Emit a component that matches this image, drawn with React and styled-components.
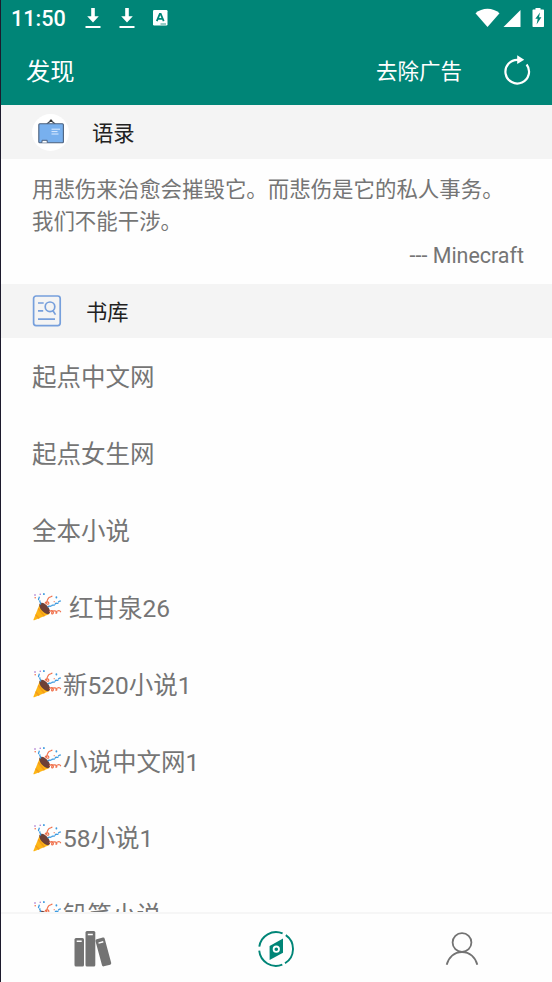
import React from "react";
import styled, { createGlobalStyle } from "styled-components";

const BOOK_SITES = [
  { name: "起点中文网" },
  { name: "起点女生网" },
  { name: "全本小说" },
  { name: "红甘泉26", party: true, spaced: true },
  { name: "新520小说1", party: true },
  { name: "小说中文网1", party: true },
  { name: "58小说1", party: true },
  { name: "铅笔小说", party: true },
];

const DownloadIcon = () => (
  <svg width="16" height="21" viewBox="0 0 16 21" fill="#fff">
    <path d="M6.2 0h3.6v8.2h4L8 14.6 2.2 8.2h4z" />
    <path d="M.5 18h15v2H.5z" />
  </svg>
);

const InputIcon = () => (
  <svg width="15" height="16" viewBox="0 0 15 16">
    <rect width="14.5" height="15.5" rx="1.2" fill="#fff" />
    <path
      d="M3.8 11.2 6.8 4h.9l3 7.2M5 8.9h4.5"
      fill="none"
      stroke="#008577"
      strokeWidth="1.8"
    />
    <path d="M7.5 14h5.5" stroke="#008577" strokeWidth=".8" />
  </svg>
);

const SignalIcons = () => (
  <svg width="70" height="20" viewBox="0 0 70 20" fill="#fff">
    <path d="M.5 5.2C7-.8 18-.8 24.5 5.2L12.5 19z" />
    <path d="M45.5 2v17h-17z" />
    <path d="M60.5 0h5v1.5h2.8q.7 0 .7.7v16.1q0 .7-.7.7H58.2q-.7 0-.7-.7V2.2q0-.7.7-.7h2.3z" />
    <path d="m65 4.5-4.7 6.2h2.4l-1.1 5.8 4.8-7.2H64z" fill="#008577" />
  </svg>
);

const RefreshIcon = () => (
  <svg width="30" height="32" viewBox="0 0 30 32" fill="none">
    <path
      d="M16 4.9A11.8 11.8 0 1 0 24.6 9.5"
      stroke="#fff"
      strokeWidth="2.2"
    />
    <path d="M15.2.2 22.2 4.8l-7 4.2z" fill="#fff" />
  </svg>
);

const BoardIcon = () => (
  <svg width="28" height="26" viewBox="0 0 28 26" fill="none">
    <path d="M9.8 5 14 1.6 18.2 5" stroke="#48505c" strokeWidth="1.3" />
    <circle cx="14" cy="1.8" r="1.3" fill="#333" />
    <rect
      x="1.8"
      y="4.8"
      width="24.6"
      height="19"
      rx="1"
      fill="#78b0ee"
      stroke="#4c617e"
      strokeWidth="1.1"
    />
    <path d="M14.5 10.2H23M14.5 12.6h6M14.5 15h7" stroke="#dcebff" />
    <path d="M5 23.6v-2.3h5.2v2.3" fill="#fff" stroke="#4c617e" />
  </svg>
);

const LibraryIcon = () => (
  <svg
    width="30"
    height="32"
    viewBox="0 0 30 32"
    fill="none"
    stroke="#769fdc"
    strokeWidth="1.7"
  >
    <rect x="1.6" y="1" width="26.6" height="29.6" rx="2.5" />
    <path d="M6 8h5.7M6 15.8h5.2M6 24.2h17" />
    <circle cx="18" cy="11.8" r="4.8" />
    <path d="m20.6 15.2 2.9 4.4" />
  </svg>
);

const PartyIcon = () => (
  <svg width="30" height="30" viewBox="0 0 30 30" fill="none">
    <path d="M8.2 11 1.5 27.4q-.4 1.2.8.9L17.5 22z" fill="#fdb515" />
    <path
      d="m6.2 16.5 6.2 7.7M3.6 22.6l3.6 3.9"
      stroke="#f39a1c"
      strokeWidth="1.4"
    />
    <ellipse
      cx="12.7"
      cy="16.4"
      rx="3.6"
      ry="7"
      transform="rotate(-42 12.7 16.4)"
      fill="#6d4037"
    />
    <g stroke="#f0714c" strokeWidth="1.2" strokeLinecap="round">
      <path d="M13.2 11.2c.2-2.4 4.7-1.2 3.4.6-1.2 1.3-3-.5-1.8-2.3 1-1.7 1-3.2 2.2-4 1-.7 2.3-.4 3-1.3" />
      <path d="M17.6 19.5c1.8-1.5 3.6-1 3.8.8.1 1.8-1.8 2.3-1.8.8 0-2.4 3.8-2.8 4.8-1.6 1 1 .2 2.2-.6 1.5M25.6 19c1.3-.6 2.5-.3 3 .8" />
    </g>
    <g stroke="#3d9be0" strokeWidth="1.3" strokeLinecap="round">
      <path d="M8.5 12c1-1.4-1.4-1.8-.6-3.2M6.6 7.6c-.5-1 .9-1.4.6-2.5" />
      <path d="M16 14.8c.8-1.2 1.6-.2 2.5-.7M19.7 13.8c.5-1.5 1.7-.2 2.7-.8M23.3 12c.4-1.4 1.5-.4 2.6-.7M26.5 10c.4-1 1.2-.6 1.9-1" />
      <path d="M11.9 1.9v.3M24.4 5.2v.3" strokeWidth="1.8" />
    </g>
    <g fill="#9b5cc7">
      <circle cx="3" cy="3" r=".8" />
      <circle cx="8.2" cy="2.2" r=".7" />
    </g>
    <g fill="#f0714c">
      <circle cx="3.2" cy="5.8" r=".8" />
      <circle cx="22.2" cy="9.7" r=".6" />
    </g>
  </svg>
);

const ShelfIcon = () => (
  <svg width="38" height="36" viewBox="0 0 38 36" fill="#737373">
    <rect x="0.5" y="7" width="9.5" height="28.5" rx="1.5" />
    <rect x="11.5" y="0" width="9.8" height="35.5" rx="1.5" />
    <rect
      x="24.6"
      y="7"
      width="9.5"
      height="28"
      rx="1.5"
      transform="rotate(-15 29.3 21)"
    />
    <path
      d="M2.7 10.2h5M13.8 3.5h5M24.5 12.1l4.8-1.3"
      stroke="#fff"
      strokeWidth="1.5"
    />
  </svg>
);

const CompassIcon = () => (
  <svg width="38" height="38" viewBox="0 0 38 38" fill="none">
    <path
      d="M2.3 16.7A16.9 16.9 0 0 1 25.6 3.4M28.8 5.1A16.9 16.9 0 0 1 28 33.3M25.3 34.7A16.9 16.9 0 0 1 2.2 20.7"
      stroke="#008577"
      strokeWidth="1.9"
    />
    <path d="M26 8.5v14.3L12.6 30V16z" fill="#008577" />
    <circle cx="19.3" cy="19.2" r="2.7" stroke="#fff" strokeWidth="1.8" />
  </svg>
);

const PersonIcon = () => (
  <svg
    width="34"
    height="34"
    viewBox="0 0 34 34"
    fill="none"
    stroke="#737373"
    strokeWidth="1.8"
  >
    <circle cx="17" cy="10.5" r="9.4" />
    <path d="M1.7 32.8C3.5 25.5 9.2 20 17 20s13.5 5.5 15.3 12.8" />
  </svg>
);

function App() {
  return (
    <>
      <GlobalStyle />
      <Screen>
        <StatusBar>
          <Clock>11:50</Clock>
          <Notifications>
            <DownloadIcon />
            <DownloadIcon />
            <InputIcon />
          </Notifications>
          <SignalIcons />
        </StatusBar>
        <AppBar>
          <Title>发现</Title>
          <RemoveAds>去除广告</RemoveAds>
          <RefreshButton aria-label="刷新">
            <RefreshIcon />
          </RefreshButton>
        </AppBar>

        <Content>
          <SectionHeader $gap="23px">
            <RoundIcon>
              <BoardIcon />
            </RoundIcon>
            <SectionName>语录</SectionName>
          </SectionHeader>
          <Quote>
            <QuoteText>
              用悲伤来治愈会摧毁它。而悲伤是它的私人事务。
              <br />
              我们不能干涉。
            </QuoteText>
            <Author>--- Minecraft</Author>
          </Quote>
          <SectionHeader $gap="24px">
            <LibraryIcon />
            <SectionName>书库</SectionName>
          </SectionHeader>
          <SiteList>
            {BOOK_SITES.map((site) => (
              <Site key={site.name} $spaced={site.spaced}>
                {site.party && <PartyIcon />}
                <SiteName>{site.name}</SiteName>
              </Site>
            ))}
          </SiteList>
        </Content>

        <TabBar>
          <Tab aria-label="书架">
            <ShelfIcon />
          </Tab>
          <Tab aria-label="发现">
            <CompassIcon />
          </Tab>
          <Tab aria-label="我的">
            <PersonIcon />
          </Tab>
        </TabBar>
      </Screen>
    </>
  );
}

const GlobalStyle = createGlobalStyle`
  * {
    box-sizing: border-box;
  }

  body {
    margin: 0;
    overflow: hidden;
    font-family: Roboto, "Noto Sans CJK SC", sans-serif;
    font-weight: 400;
  }

  svg {
    display: block;
    flex-shrink: 0;
  }

  button {
    padding: 0;
    border: none;
    background: none;
  }
`;

const Screen = styled.div`
  display: flex;
  flex-direction: column;
  width: 552px;
  height: 982px;
  border-left: 1px solid #1d1b2d;
  background-color: #fefefe;
`;

const StatusBar = styled.div`
  display: flex;
  align-items: center;
  height: 36px;
  flex-shrink: 0;
  padding: 0 7px 0 10px;
  color: #fff;
  background-color: #008577;
`;

const Clock = styled.span`
  width: 74px;
  padding-top: 2px;
  font-size: 21.6px;
  font-weight: 500;
  line-height: 34px;
`;

const Notifications = styled.div`
  display: flex;
  align-items: center;
  flex: 1;
  gap: 18px;
`;

const AppBar = styled.header`
  display: flex;
  align-items: center;
  height: 69px;
  flex-shrink: 0;
  padding: 0 20px 0 25px;
  color: #fff;
  background-color: #008577;
`;

const Title = styled.h1`
  flex: 1;
  margin: 0;
  padding-bottom: 3px;
  font-size: 24.3px;
  font-weight: inherit;
`;

const RemoveAds = styled.button`
  margin-right: 40px;
  padding-bottom: 3px;
  font-family: inherit;
  font-size: 21.5px;
  font-weight: inherit;
  color: #fff;
`;

const RefreshButton = styled.button``;

const Content = styled.main`
  flex: 1;
  min-height: 0;
  overflow: hidden;
`;

const SectionHeader = styled.h2`
  display: flex;
  align-items: center;
  gap: ${(props) => props.$gap};
  height: 54px;
  margin: 0;
  padding-left: 31px;
  font-size: 21.3px;
  font-weight: inherit;
  color: #212121;
  background-color: #f4f4f4;
`;

const SectionName = styled.span`
  padding-bottom: 2px;
`;

const RoundIcon = styled.span`
  display: flex;
  justify-content: center;
  align-items: center;
  width: 37px;
  height: 37px;
  border-radius: 50%;
  background-color: #fff;
`;

const Quote = styled.div`
  height: 125px;
  padding: 15px 28px 0 31px;
  font-size: 21.45px;
  color: #757575;
`;

const QuoteText = styled.p`
  margin: 0;
  line-height: 31.5px;
  white-space: nowrap;
`;

const Author = styled.p`
  margin: 3px 0 0;
  line-height: 31px;
  text-align: right;
`;

const SiteList = styled.ul`
  margin: 0;
  padding: 0;
  list-style: none;
`;

const Site = styled.li`
  display: flex;
  align-items: center;
  gap: ${(props) => (props.$spaced ? "7px" : "1px")};
  height: 76.85px;
  padding: 1px 0 0 31px;
  font-size: 24.5px;
  color: #757575;
`;

const SiteName = styled.span`
  padding-bottom: 2px;
`;

const TabBar = styled.nav`
  display: grid;
  grid-template-columns: repeat(3, 1fr);
  height: 70px;
  flex-shrink: 0;
  border-top: 2px solid #f6f6f6;
`;

const Tab = styled.button`
  display: flex;
  justify-content: center;
  align-items: center;
  padding-top: 1px;

  &:last-child {
    padding-left: 3px;
  }
`;

export default App;
